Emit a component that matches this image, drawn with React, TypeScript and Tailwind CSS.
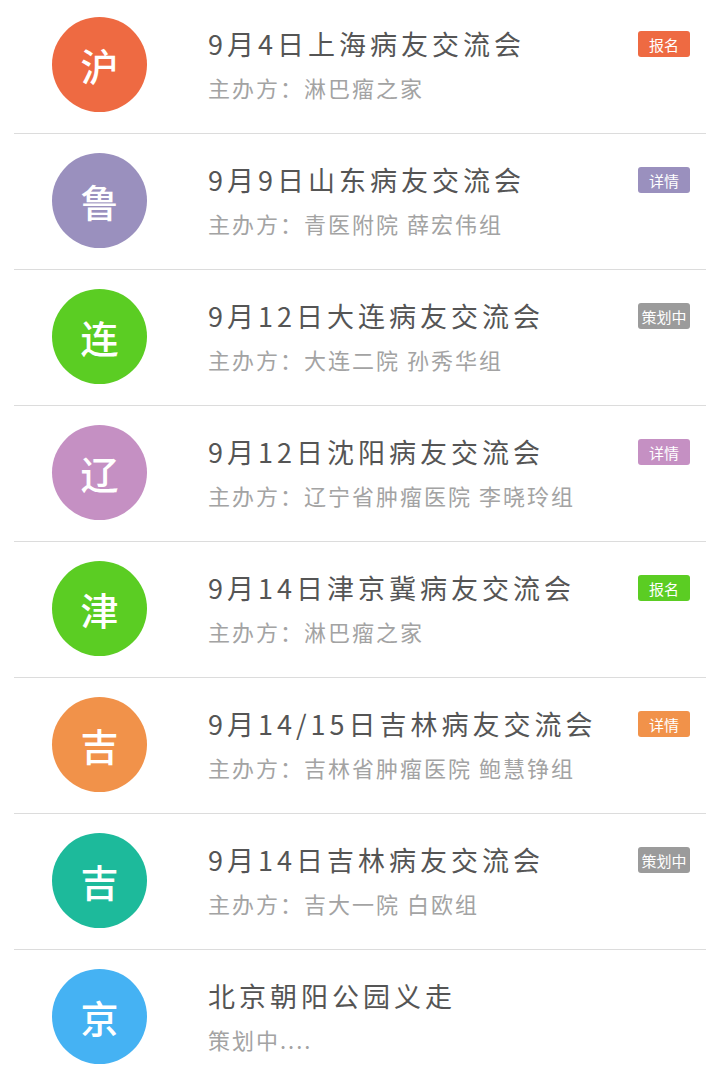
const ORANGE = "#ee6a42";
const PURPLE = "#9a90be";
const GREEN = "#5bcd23";
const PINK = "#c590c3";
const AMBER = "#f1924a";
const TEAL = "#1dba9b";
const BLUE = "#45b2f3";
const GRAY = "#9b9b9b";

type Event = {
  mark: string;
  color: string;
  title: string;
  host: string;
  tag?: { label: string; color: string };
};

const events: Event[] = [
  { mark: "沪", color: ORANGE, title: "9月4日上海病友交流会", host: "主办方：淋巴瘤之家", tag: { label: "报名", color: ORANGE } },
  { mark: "鲁", color: PURPLE, title: "9月9日山东病友交流会", host: "主办方：青医附院 薛宏伟组", tag: { label: "详情", color: PURPLE } },
  { mark: "连", color: GREEN, title: "9月12日大连病友交流会", host: "主办方：大连二院 孙秀华组", tag: { label: "策划中", color: GRAY } },
  { mark: "辽", color: PINK, title: "9月12日沈阳病友交流会", host: "主办方：辽宁省肿瘤医院 李晓玲组", tag: { label: "详情", color: PINK } },
  { mark: "津", color: GREEN, title: "9月14日津京冀病友交流会", host: "主办方：淋巴瘤之家", tag: { label: "报名", color: GREEN } },
  { mark: "吉", color: AMBER, title: "9月14/15日吉林病友交流会", host: "主办方：吉林省肿瘤医院 鲍慧铮组", tag: { label: "详情", color: AMBER } },
  { mark: "吉", color: TEAL, title: "9月14日吉林病友交流会", host: "主办方：吉大一院 白欧组", tag: { label: "策划中", color: GRAY } },
  { mark: "京", color: BLUE, title: "北京朝阳公园义走", host: "策划中...." },
];

export default function App() {
  return (
    <div
      className="min-h-screen overflow-hidden bg-white px-[14px]"
      style={{ fontFamily: '"Noto Sans CJK SC", "Noto Sans", sans-serif' }}
    >
      <div className="-mt-[2px]">
        {events.map((e, i) => (
          <div
            key={i}
            className={[
              "box-content flex h-[135px]",
              i < events.length - 1 ? "border-b border-[#dcdcdc]" : "",
            ].join(" ")}
          >
            <div
              className="ml-[38px] mt-[19px] flex h-[95px] w-[95px] shrink-0 items-center justify-center rounded-full text-[38px] font-medium leading-none text-white"
              style={{ background: e.color }}
            >
              {e.mark}
            </div>

            <div className="ml-[61px] mr-[16px] flex-1 pt-[30px]">
              <div className="flex h-[32px] items-center justify-between">
                <p className="text-[27px] leading-[32px] tracking-[4px] text-[#555]">{e.title}</p>
                {e.tag && (
                  <span
                    className="flex h-[26px] w-[52px] items-center justify-center rounded-[3px] text-[15px] leading-none text-white"
                    style={{ background: e.tag.color }}
                  >
                    {e.tag.label}
                  </span>
                )}
              </div>
              <p className="mt-[13px] text-[22px] leading-[28px] tracking-[2px] text-[#a3a3a3]">
                {e.host}
              </p>
            </div>
          </div>
        ))}
      </div>
    </div>
  );
}
